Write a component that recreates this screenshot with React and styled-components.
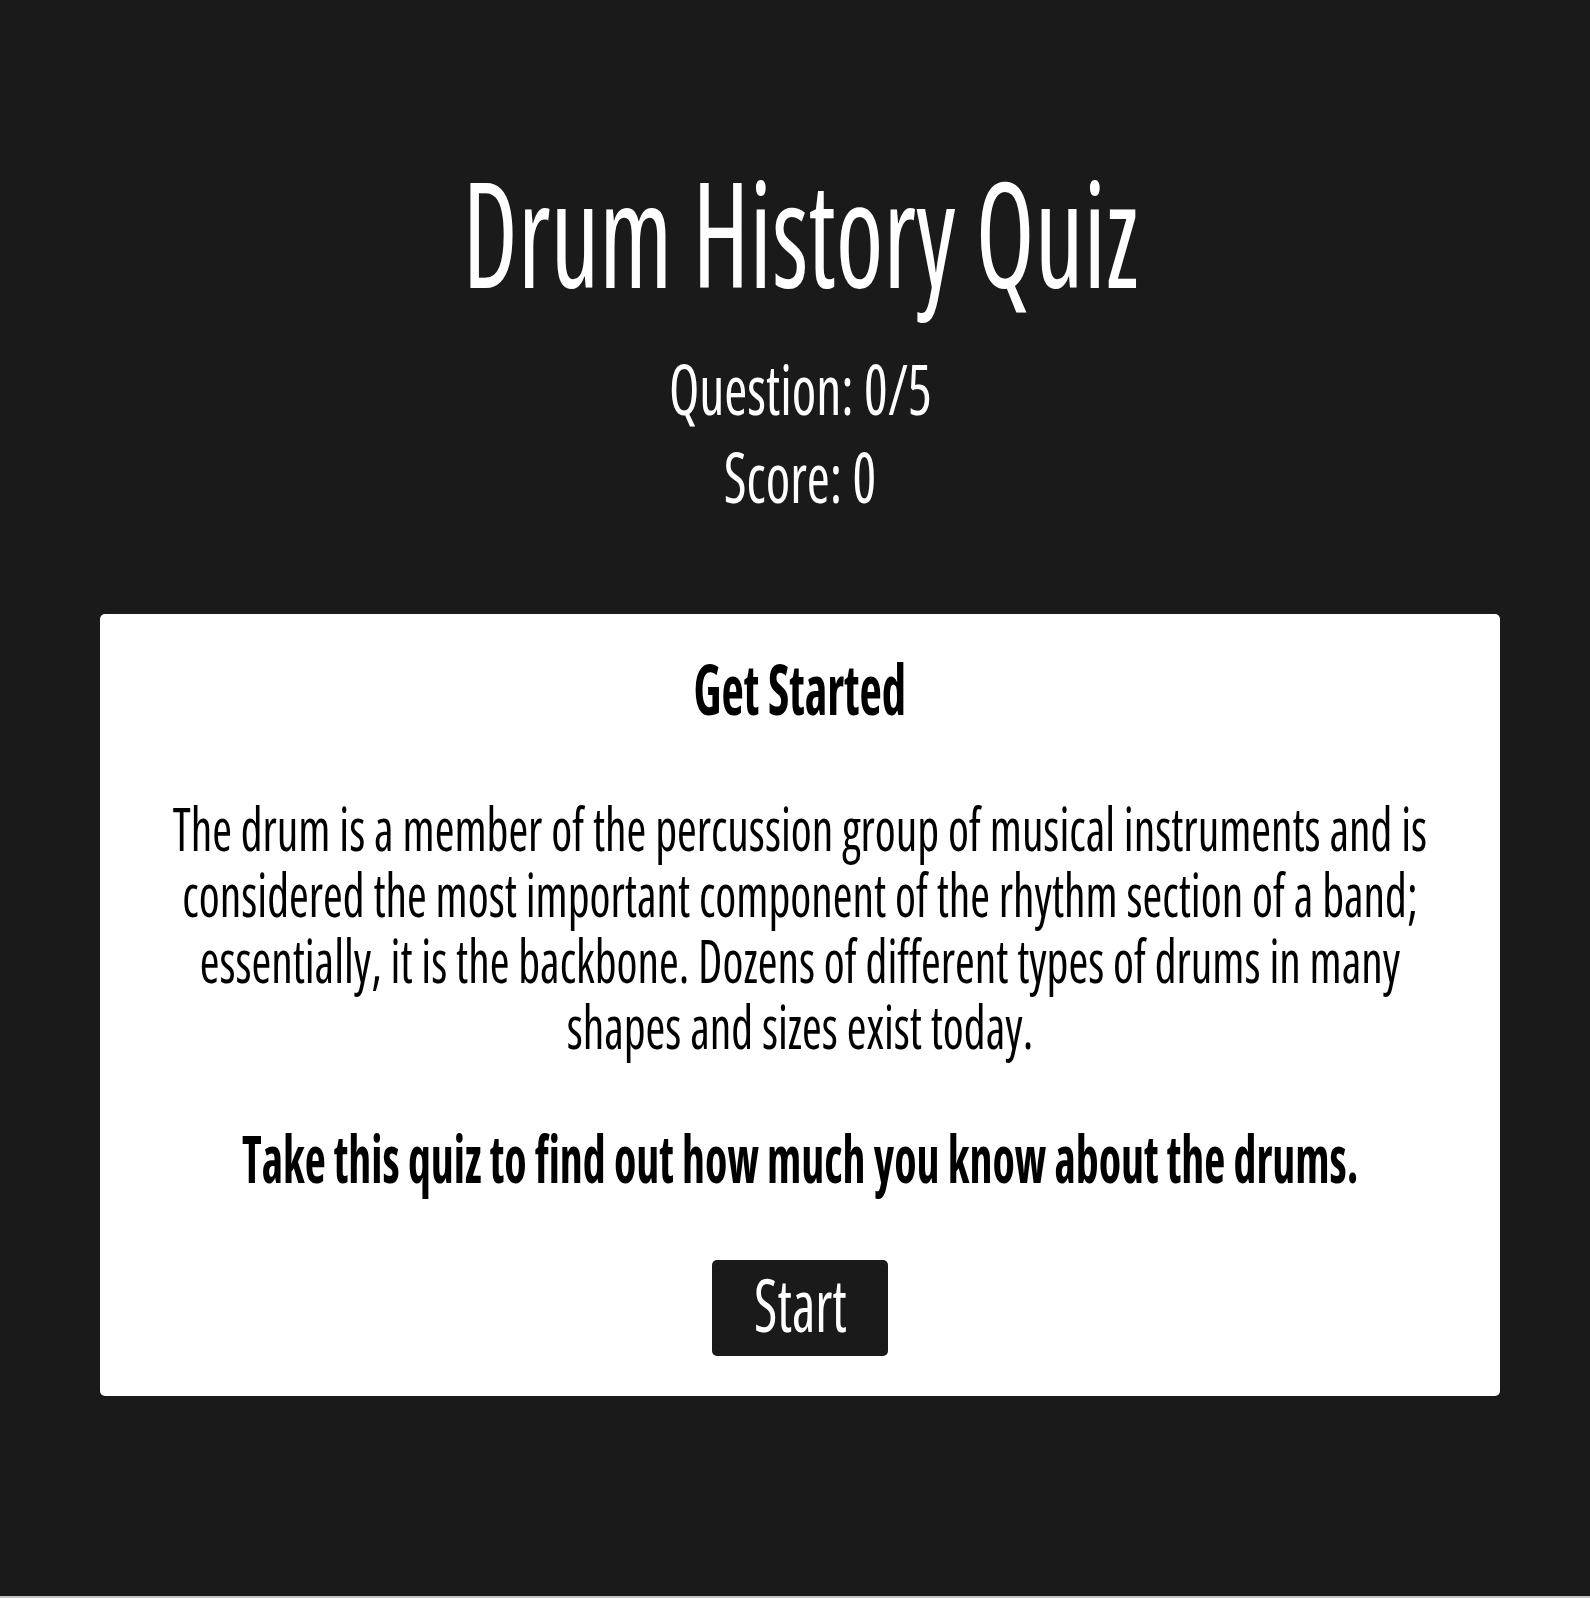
import React from 'react'
import styled, { createGlobalStyle, css } from 'styled-components'

// no condensed face is installed, so Open Sans at its narrowest width
// gets squeezed a bit more horizontally (bold needs more of it)
const REGULAR = 0.795
const BOLD = 0.695
const DISPLAY = 0.737

const GlobalStyle = createGlobalStyle`
  html, body {
    margin: 0;
    padding: 0;
    background: #fff;
    overflow-x: hidden;
  }
  body {
    font-family: "Open Sans", "Liberation Sans", sans-serif;
    font-stretch: 75%;
  }
`

const squeeze = k => css`
  transform: scaleX(${k});
  transform-origin: center;
  white-space: nowrap;
`

const Page = styled.div`
  min-height: 1598px;
  background: #1a1a1a;
  border-bottom: 2px solid #c2c2c2;
  box-sizing: border-box;
`

const Column = styled.main`
  width: 1400px;
  margin-left: 100px;
  padding-top: 143px;
  display: flex;
  flex-direction: column;
  align-items: center;
`

const Title = styled.h1`
  ${squeeze(DISPLAY)};
  margin: 0 0 25px;
  color: #fff;
  font-size: 147px;
  line-height: 176px;
  font-weight: 500;
`

const Stat = styled.div`
  ${squeeze(REGULAR)};
  color: #fff;
  font-size: 70px;
  line-height: 88px;
  font-weight: 400;
`

const Card = styled.section`
  align-self: stretch;
  margin-top: 94px;
  background: #fff;
  border-radius: 5px;
  padding: 30px 0 40px;
  display: flex;
  flex-direction: column;
  align-items: center;
`

const CardTitle = styled.h2`
  ${squeeze(BOLD)};
  margin: 0;
  color: #000;
  font-size: 70px;
  line-height: 88px;
  font-weight: 700;
`

const Intro = styled.p`
  ${squeeze(REGULAR)};
  margin: 63px 0 0;
  color: #000;
  font-size: 60px;
  line-height: 66px;
  font-weight: 400;
  text-align: center;
`

const Callout = styled.p`
  ${squeeze(BOLD)};
  margin: 59px 0 0;
  color: #000;
  font-size: 66px;
  line-height: 79px;
  font-weight: 700;
`

const StartButton = styled.button`
  margin-top: 63px;
  width: 176px;
  height: 96px;
  padding: 0 0 8px;
  border: none;
  border-radius: 5px;
  background: #1a1a1a;
  color: #fff;
  font-family: inherit;
  font-stretch: 75%;
  font-size: 73px;
  line-height: 88px;
  cursor: pointer;
  display: flex;
  justify-content: center;

  span {
    ${squeeze(0.78)};
    display: block;
  }
`

export default function App() {
  const question = 0
  const total = 5
  const score = 0

  return (
    <>
      <GlobalStyle />
      <Page>
        <Column>
          <Title>Drum History Quiz</Title>
          <Stat>Question: {question}/{total}</Stat>
          <Stat>Score: {score}</Stat>

          <Card>
            <CardTitle>Get Started</CardTitle>
            <Intro>
              The drum is a member of the percussion group of musical instruments and is<br />
              considered the most important component of the rhythm section of a band;<br />
              essentially, it is the backbone. Dozens of different types of drums in many<br />
              shapes and sizes exist today.
            </Intro>
            <Callout>Take this quiz to find out how much you know about the drums.</Callout>
            <StartButton><span>Start</span></StartButton>
          </Card>
        </Column>
      </Page>
    </>
  )
}
